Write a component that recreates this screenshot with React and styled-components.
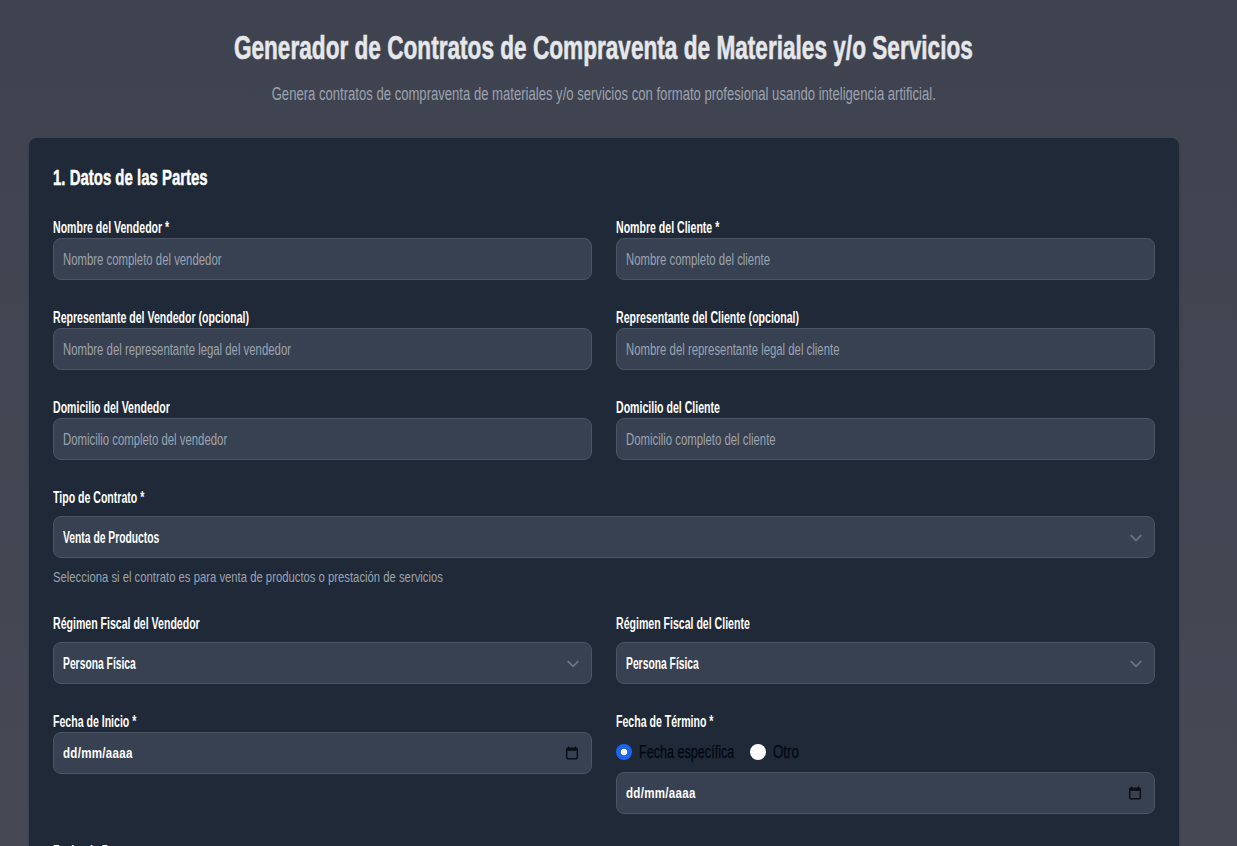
import styled, { createGlobalStyle } from "styled-components";

const GlobalStyle = createGlobalStyle`
  html, body {
    margin: 0;
    height: 846px;
    overflow: hidden;
  }
  body {
    background: linear-gradient(180deg, #3f434f 0%, #454954 100%);
    font-family: "Liberation Sans", Arial, sans-serif;
  }
`;

// no condensed family is installed, so the text is squeezed horizontally
const Narrow = styled.span`
  display: inline-block;
  white-space: nowrap;
  transform: scaleX(${(p) => p.$x ?? 0.665});
  transform-origin: ${(p) => (p.$center ? "center" : "left")};
  width: ${(p) => (p.$width ? `${p.$width}px` : "auto")};
`;

const Page = styled.div`
  width: 1150px;
  margin-left: 29px;
  padding-top: 28px;
`;

const Header = styled.header`
  text-align: center;
  margin-bottom: 32px;
`;

const Title = styled.h1`
  margin: 0 0 14px;
  padding-right: 2px;
  font-size: 33.5px;
  line-height: 40px;
  font-weight: 700;
  color: #e5e7eb;
  -webkit-text-stroke: 0.6px #e5e7eb;
`;

const Subtitle = styled.p`
  margin: 0;
  font-size: 18px;
  line-height: 24px;
  color: #9ca3af;
`;

const Card = styled.section`
  background: #1f2937;
  border-radius: 8px;
  padding: 24px 24px 0;
  height: 900px;
  box-shadow: 0 1px 3px rgba(0, 0, 0, 0.2);
`;

const SectionTitle = styled.h2`
  margin: 0 0 23px;
  padding-top: 1px;
  font-size: 22.5px;
  line-height: 30px;
  font-weight: 700;
  color: #fff;
  -webkit-text-stroke: 0.5px #fff;
`;

const Row = styled.div`
  display: grid;
  grid-template-columns: 1fr 1fr;
  column-gap: 24px;
  margin-top: ${(p) => p.$top ?? 0}px;
  margin-bottom: ${(p) => p.$gap ?? 26}px;
`;

const Field = styled.div`
  min-width: 0;
`;

const Label = styled.label`
  display: block;
  box-sizing: border-box;
  height: 21px;
  padding-top: 2px;
  font-size: 16px;
  line-height: 19px;
  font-weight: 700;
  color: #fff;
  margin-bottom: ${(p) => p.$gap ?? 1}px;
`;

const Control = styled.div`
  height: 42px;
  box-sizing: border-box;
  background: #374151;
  border: 1px solid #4b5563;
  border-radius: 8px;
  display: flex;
  align-items: center;
  justify-content: space-between;
  padding: ${(p) => p.$down ?? 2}px ${(p) => p.$right ?? 10}px 0 9px;
  overflow: hidden;
`;

const Input = styled.input`
  flex: none;
  width: calc(100% / 0.71);
  height: 38px;
  box-sizing: border-box;
  background: transparent;
  border: 0;
  padding: 0;
  font: 400 16px "Liberation Sans", Arial, sans-serif;
  color: #fff;
  outline: none;
  transform: scaleX(0.71);
  transform-origin: left;

  &::placeholder {
    color: #9ca3af;
    opacity: 1;
  }
`;

const Value = styled.span`
  font-size: 16px;
  font-weight: 700;
  color: #fff;
`;

const DateValue = styled(Value)`
  font-size: 15.5px;
  letter-spacing: 0.4px;
`;

const Hint = styled.p`
  margin: 9px 0 0;
  font-size: 15px;
  line-height: 20px;
  color: #9ca3af;
`;

const RadioRow = styled.div`
  display: flex;
  align-items: center;
  height: 20px;
  margin-bottom: 10px;
  gap: 16px;
`;

const RadioLabel = styled.label`
  display: flex;
  align-items: center;
  gap: 7px;
  font-size: 18px;
  color: #030712;
  -webkit-text-stroke: 0.25px #030712;
`;

const Radio = styled.input.attrs({ type: "radio" })`
  appearance: none;
  margin: 0;
  width: 16px;
  height: 16px;
  border-radius: 50%;
  background: #fff;

  &:checked {
    background: radial-gradient(circle, #fff 0 3px, #1c64f2 3.6px);
  }
`;

const ChevronSvg = styled.svg`
  width: 16px;
  height: 16px;
  flex: none;
`;

const CalendarSvg = styled.svg`
  width: 14px;
  height: 14px;
  flex: none;
`;

const Chevron = () => (
  <ChevronSvg viewBox="0 0 20 20" fill="none">
    <path d="M4 7l6 6 6-6" stroke="#6b7280" strokeWidth="2.4" strokeLinecap="round" strokeLinejoin="round" />
  </ChevronSvg>
);

const CalendarIcon = () => (
  <CalendarSvg viewBox="0 0 14 14" fill="none">
    <path d="M3.5 0.5v2M10.5 0.5v2" stroke="#0b0f17" strokeWidth="1.4" />
    <rect x="1.7" y="2.2" width="10.6" height="10.6" rx="1" stroke="#0b0f17" strokeWidth="1.5" />
    <rect x="1.7" y="2.2" width="10.6" height="2.6" fill="#0b0f17" />
  </CalendarSvg>
);

const FieldLabel = ({ children, gap }) => (
  <Label $gap={gap}>
    <Narrow $x={0.66}>{children}</Narrow>
  </Label>
);

const TextField = ({ label, placeholder }) => (
  <Field>
    <FieldLabel>{label}</FieldLabel>
    <Control>
      <Input placeholder={placeholder} />
    </Control>
  </Field>
);

const SelectControl = ({ value }) => (
  <Control>
    <Value>
      <Narrow $x={0.645}>{value}</Narrow>
    </Value>
    <Chevron />
  </Control>
);

const DateControl = () => (
  <Control $right={12} $down={0}>
    <DateValue>
      <Narrow $x={0.745}>dd/mm/aaaa</Narrow>
    </DateValue>
    <CalendarIcon />
  </Control>
);

export default function App() {
  return (
    <>
      <GlobalStyle />
      <Page>
        <Header>
          <Title>
            <Narrow $x={0.675} $center>
              Generador de Contratos de Compraventa de Materiales y/o Servicios
            </Narrow>
          </Title>
          <Subtitle>
            <Narrow $x={0.727} $center>
              Genera contratos de compraventa de materiales y/o servicios con formato profesional usando inteligencia artificial.
            </Narrow>
          </Subtitle>
        </Header>
        <Card>
          <SectionTitle>
            <Narrow $x={0.665}>1. Datos de las Partes</Narrow>
          </SectionTitle>
          <Row>
            <TextField label="Nombre del Vendedor *" placeholder="Nombre completo del vendedor" />
            <TextField label="Nombre del Cliente *" placeholder="Nombre completo del cliente" />
          </Row>
          <Row>
            <TextField label="Representante del Vendedor (opcional)" placeholder="Nombre del representante legal del vendedor" />
            <TextField label="Representante del Cliente (opcional)" placeholder="Nombre del representante legal del cliente" />
          </Row>
          <Row>
            <TextField label="Domicilio del Vendedor" placeholder="Domicilio completo del vendedor" />
            <TextField label="Domicilio del Cliente" placeholder="Domicilio completo del cliente" />
          </Row>
          <Field>
            <FieldLabel gap={9}>Tipo de Contrato *</FieldLabel>
            <SelectControl value="Venta de Productos" />
            <Hint>
              <Narrow $x={0.753}>Selecciona si el contrato es para venta de productos o prestación de servicios</Narrow>
            </Hint>
          </Field>
          <Row $top={25} $gap={26}>
            <Field>
              <FieldLabel gap={9}>Régimen Fiscal del Vendedor</FieldLabel>
              <SelectControl value="Persona Física" />
            </Field>
            <Field>
              <FieldLabel gap={9}>Régimen Fiscal del Cliente</FieldLabel>
              <SelectControl value="Persona Física" />
            </Field>
          </Row>
          <Row>
            <Field>
              <FieldLabel gap={1}>Fecha de Inicio *</FieldLabel>
              <DateControl />
            </Field>
            <Field>
              <FieldLabel gap={11}>Fecha de Término *</FieldLabel>
              <RadioRow>
                <RadioLabel>
                  <Radio name="termino" defaultChecked />
                  <Narrow $x={0.7} $width={95}>Fecha específica</Narrow>
                </RadioLabel>
                <RadioLabel>
                  <Radio name="termino" />
                  <Narrow $x={0.74} $width={26}>Otro</Narrow>
                </RadioLabel>
              </RadioRow>
              <DateControl />
            </Field>
          </Row>
          <FieldLabel>Fecha de Pago</FieldLabel>
        </Card>
      </Page>
    </>
  );
}
